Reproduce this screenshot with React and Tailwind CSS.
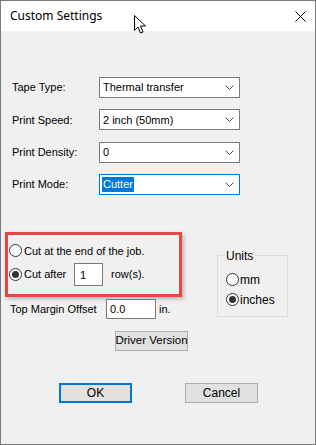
const FIELDS = [
  { label: "Tape Type:", value: "Thermal transfer" },
  { label: "Print Speed:", value: "2 inch (50mm)" },
  { label: "Print Density:", value: "0" },
  { label: "Print Mode:", value: "Cutter", focused: true },
];

/* ---------- Bits ---------- */
function Chevron() {
  return (
    <svg width="9" height="5" viewBox="0 0 9 5" className="shrink-0">
      <path d="M0.5 0.5 L4.5 4.5 L8.5 0.5" fill="none" stroke="#4a4a4a" strokeWidth="1" />
    </svg>
  );
}

function Radio({ checked }) {
  return (
    <span className="w-[13px] h-[13px] rounded-full border border-[#333] bg-white flex items-center justify-center shrink-0">
      {checked && <span className="w-[7px] h-[7px] rounded-full bg-[#333]" />}
    </span>
  );
}

function Select({ value, focused }) {
  return (
    <div
      className={`w-[141px] h-[21px] bg-white border flex items-center justify-between pl-[2px] pr-[5px] ${
        focused ? "border-[#0078d7]" : "border-[#7a7a7a]"
      }`}
    >
      {focused ? (
        <span className="bg-[#0078d7] text-white leading-[15px] px-[1px]">{value}</span>
      ) : (
        <span className="px-[1px]">{value}</span>
      )}
      <Chevron />
    </div>
  );
}

function Button({ children, primary, className = "" }) {
  return (
    <div
      className={`w-[73px] h-[20px] bg-[#e1e1e1] flex items-center justify-center whitespace-nowrap ${
        primary ? "border-2 border-[#0078d7]" : "border border-[#adadad]"
      } ${className}`}
    >
      {children}
    </div>
  );
}

function Cursor() {
  return (
    <svg
      width="13"
      height="20"
      viewBox="0 0 13 20"
      className="absolute left-[133px] top-[14px]"
    >
      <path
        d="M0.5 0.5 L0.5 15.5 L4 12 L6.5 18 L9 17 L6.5 11 L11.5 11 Z"
        fill="white"
        stroke="black"
        strokeWidth="1"
        strokeLinejoin="round"
      />
    </svg>
  );
}

/* ---------- Dialog ---------- */
export default function App() {
  return (
    <div
      className="relative w-[316px] h-[445px] border border-[#7a7a7a] bg-[#f0f0f0] text-[11px] text-black flex flex-col"
      style={{ fontFamily: '"Liberation Sans", Arial, sans-serif' }}
    >
      {/* Title bar */}
      <div className="h-[30px] bg-white flex items-center justify-between pl-[9px] pr-[9px]">
        <span className="text-[12px]" style={{ fontFamily: '"Noto Sans", sans-serif' }}>
          Custom Settings
        </span>
        <svg width="11" height="11" viewBox="0 0 11 11">
          <path d="M0.5 0.5 L10.5 10.5 M10.5 0.5 L0.5 10.5" stroke="black" strokeWidth="1" />
        </svg>
      </div>
      <Cursor />

      {/* Dropdowns */}
      <div className="mt-[46px] ml-[11px] flex flex-col gap-[11.3px]">
        {FIELDS.map((f) => (
          <div key={f.label} className="flex items-center h-[21px]">
            <span className="w-[87px]">{f.label}</span>
            <Select value={f.value} focused={f.focused} />
          </div>
        ))}
      </div>

      {/* Cut options + units */}
      <div className="mt-[37px] ml-[4px] flex items-start">
        <div className="flex flex-col">
          <div className="w-[177px] h-[65px] border-[3px] border-[#e84545] shadow-[2px_2px_4px_rgba(0,0,0,0.25)] flex flex-col pt-[8px] gap-[4px] pl-[1px]">
            <div className="flex items-center h-[16px] gap-[2px]">
              <Radio />
              <span>Cut at the end of the job.</span>
            </div>
            <div className="flex items-center h-[23px]">
              <Radio checked />
              <span className="ml-[2px] w-[50px]">Cut after</span>
              <div className="w-[29px] h-[23px] bg-white border border-[#7a7a7a] pl-[5px] pt-[3px]">1</div>
              <span className="ml-[8px]">row(s).</span>
            </div>
          </div>
          <div className="flex items-start mt-[2px] pl-[5px]">
            <span className="w-[96px] pt-[2px]">Top Margin Offset</span>
            <div className="w-[50px] h-[20px] bg-white border border-[#7a7a7a] pl-[3px] flex items-center">0.0</div>
            <span className="ml-[3px] pt-[2px]">in.</span>
          </div>
        </div>

        <fieldset className="ml-[35px] mt-[17px] w-[71px] h-[68px] border border-[#dcdcdc] pl-[8px] pt-[10px] flex flex-col gap-[6px]">
          <legend className="-ml-[1px] px-[1px] text-[12px] leading-[14px]">Units</legend>
          <div className="flex items-center gap-[1px] h-[14px]">
            <Radio />
            <span className="text-[12px] leading-[14px]">mm</span>
          </div>
          <div className="flex items-center gap-[1px] h-[14px]">
            <Radio checked />
            <span className="text-[12px] leading-[14px]">inches</span>
          </div>
        </fieldset>
      </div>

      {/* Buttons */}
      <Button className="mt-[12px] ml-[114px] text-[11.5px]">Driver Version</Button>
      <div className="mt-[32px] ml-[58px] flex gap-[53px] text-[12px]">
        <Button primary>OK</Button>
        <Button>Cancel</Button>
      </div>
    </div>
  );
}
